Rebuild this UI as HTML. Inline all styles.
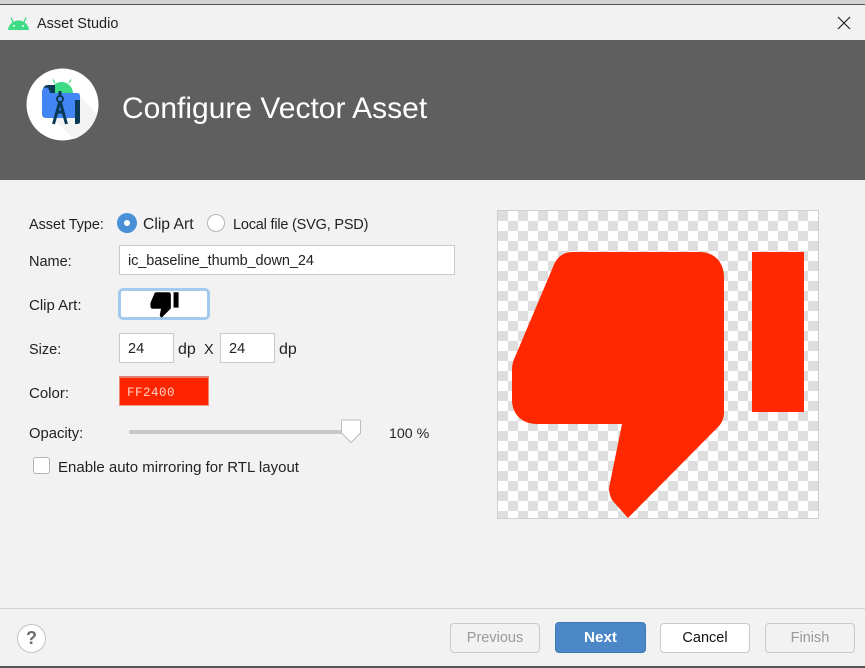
<!DOCTYPE html>
<html><head><meta charset="utf-8">
<style>
html,body{margin:0;padding:0}
body{width:865px;height:668px;overflow:hidden;position:relative;background:#f2f2f2;font-family:"Liberation Sans",sans-serif;font-size:14.5px;color:#222}
.a{position:absolute;white-space:nowrap}
.l{position:absolute;white-space:nowrap;line-height:18px;margin-top:1px}
.f{position:absolute;box-sizing:border-box;background:#fff;border:1px solid #c9c9c9;line-height:30px;padding-left:8px;color:#222}
.b{position:absolute;box-sizing:border-box;top:623px;height:30px;border-radius:4px;border:1px solid #c9c9c9;text-align:center;line-height:29px;font-size:14.5px}
</style></head><body>
<div class="a" style="left:0;top:0;width:865px;height:4px;background:#d4d4d4"></div>
<div class="a" style="left:0;top:4px;width:865px;height:1px;background:#555"></div>
<svg class="a" style="left:8px;top:16px" width="21" height="15" viewBox="0 0 21 15"><path d="M0 14C.5 8.500 5 4.500 10.500 4.500S20.500 8.500 21 14Z" fill="#3ddc84"/><path d="M5 6 3 1.500M16 6l2-4.500" stroke="#3ddc84" stroke-width="1.300" fill="none"/><circle cx="6" cy="10" r="1" fill="#fff"/><circle cx="15" cy="10" r="1" fill="#fff"/></svg>
<div class="l" style="left:37px;top:14px;color:#222">Asset Studio</div>
<svg class="a" style="left:837px;top:16px" width="14" height="14" viewBox="0 0 14 14"><path d="M1 1 13 13M13 1 1 13" stroke="#222" stroke-width="1.200" fill="none"/></svg>
<div class="a" style="left:0;top:40px;width:865px;height:140px;background:#5f5f5f"></div>
<svg class="a" style="left:26px;top:68px" width="73" height="73" viewBox="0 0 73 73">
<circle cx="36.500" cy="36.500" r="36" fill="#fff"/>
<path d="M50 24 71 46A36 36 0 0 1 48 71L26 50Z" fill="#f3f3f3"/>
<path d="M29 15 27 11.500M43 15l2-3.500" stroke="#3ddc84" stroke-width="1.200"/>
<path d="M24 26C24 19 29 14 35.500 14S47 19 47 26Z" fill="#3ddc84"/>
<path d="M17 22C17 19 19 17 22 17H29V25H17Z" fill="#0b3a57"/>
<path d="M16 24Q16 19.500 20 19.500Q23 19.500 24 25H51Q54 25 54 28V32H49V50H20Q16 50 16 46Z" fill="#4285f4"/>
<path d="M49 32H54V54Q54 56 51 56H49Z" fill="#0b3a57"/>
<path d="M34 23V28M34 33 27.500 56M34 33 40.500 56M29.500 44H38.500" stroke="#0b3a57" stroke-width="3" fill="none"/>
<circle cx="34" cy="31" r="3" fill="#4285f4" stroke="#0b3a57" stroke-width="2"/>
</svg>
<div class="a" style="left:122px;top:91px;font-size:30px;line-height:36px;color:#fff">Configure Vector Asset</div>

<div class="l" style="left:29px;top:215px;font-size:14.4px">Asset Type:</div>
<div class="a" style="left:117px;top:213px;width:20px;height:20px;border-radius:50%;background:#4a90d9"></div>
<div class="a" style="left:124px;top:220px;width:6px;height:6px;border-radius:50%;background:#fff"></div>
<div class="l" style="left:143px;top:215px;font-size:15.7px">Clip Art</div>
<div class="a" style="left:207px;top:214px;width:18px;height:18px;box-sizing:border-box;border-radius:50%;background:#fff;border:1px solid #b5b5b5"></div>
<div class="l" style="left:233px;top:215px;letter-spacing:-.2px">Local file (SVG, PSD)</div>

<div class="l" style="left:29px;top:252px">Name:</div>
<div class="f" style="left:119px;top:245px;width:336px;height:30px;letter-spacing:-.08px">ic_baseline_thumb_down_24</div>

<div class="l" style="left:29px;top:296px;font-size:15px">Clip Art:</div>
<div class="a" style="left:118px;top:288px;width:92px;height:32px;box-sizing:border-box;background:#fff;border:3px solid #a3c9f0;border-radius:5px"></div>
<svg class="a" style="left:149px;top:292px" width="31" height="26" viewBox="509 250 298 270"><path d="M572 252H700C714 252 724 262 724 277V412C724 418 722 423 718 427L628 518 612 500C610 496 609 492 609 488L622 424H537C522 424 512 414 512 400V370C512 365 513 361 515 357L553 267C556 258 563 252 572 252ZM752 252H804V412H752Z" fill="#000"/></svg>

<div class="l" style="left:29px;top:340px">Size:</div>
<div class="f" style="left:119px;top:333px;width:55px;height:30px">24</div>
<div class="l" style="left:178px;top:340px;font-size:16px">dp</div>
<div class="l" style="left:204px;top:340px">X</div>
<div class="f" style="left:220px;top:333px;width:55px;height:30px">24</div>
<div class="l" style="left:279px;top:340px;font-size:16px">dp</div>

<div class="l" style="left:29px;top:384px;font-size:15px">Color:</div>
<div class="a" style="left:119px;top:376px;width:90px;height:30px;box-sizing:border-box;background:#ff2400;border:1px solid #ee8877;border-bottom-color:#f4a090;border-top:2px solid #e08070"></div>
<div class="a" style="left:127px;top:385px;font-family:'Liberation Mono',monospace;font-size:12.500px;line-height:16px;color:#ffd3c9;letter-spacing:.5px">FF2400</div>

<div class="l" style="left:29px;top:424px;font-size:14.8px">Opacity:</div>
<div class="a" style="left:129px;top:430px;width:214px;height:4px;border-radius:2px;background:#c8c8c8"></div>
<svg class="a" style="left:340px;top:419px" width="22" height="25" viewBox="0 0 22 25"><path d="M1.500 2.500Q1.500 1 3 1H19Q20.500 1 20.500 2.500V14L11 23.500 1.500 14Z" fill="#fff" stroke="#bdbdbd" stroke-width="1"/></svg>
<div class="l" style="left:389px;top:424px;font-size:14.2px">100 %</div>

<div class="a" style="left:33px;top:457px;width:17px;height:17px;box-sizing:border-box;background:#fff;border:1px solid #b5b5b5;border-radius:3px"></div>
<div class="l" style="left:58px;top:458px;font-size:15px">Enable auto mirroring for RTL layout</div>

<div class="a" style="left:497px;top:210px;width:322px;height:309px;box-sizing:border-box;border:1px solid #cfcfcf;background-color:#fff;background-image:linear-gradient(45deg,#dedede 25%,transparent 25%,transparent 75%,#dedede 75%),linear-gradient(45deg,#dedede 25%,transparent 25%,transparent 75%,#dedede 75%);background-size:20px 20px;background-position:10px 0,0 10px"></div>
<svg class="a" style="left:0;top:0" width="865" height="668" viewBox="0 0 865 668"><path d="M572 252H700C714 252 724 262 724 277V412C724 418 722 423 718 427L628 518 612 500C610 496 609 492 609 488L622 424H537C522 424 512 414 512 400V370C512 365 513 361 515 357L553 267C556 258 563 252 572 252ZM752 252H804V412H752Z" fill="#ff2800"/></svg>

<div class="a" style="left:0;top:608px;width:865px;height:1px;background:#d2d2d2"></div>
<div class="a" style="left:17px;top:624px;width:29px;height:29px;box-sizing:border-box;border-radius:50%;background:#fff;border:1px solid #c4c4c4;text-align:center;line-height:27px;font-weight:bold;font-size:18px;color:#6e6e6e">?</div>
<div class="b" style="left:450px;width:90px;color:#9a9a9a;background:#f2f2f2">Previous</div>
<div class="b" style="left:555px;width:91px;height:31px;top:622px;background:#4c87c7;border-color:#3f78b5;color:#fff;font-weight:bold;line-height:30px;font-size:15.2px">Next</div>
<div class="b" style="left:660px;width:90px;background:#fff;color:#111">Cancel</div>
<div class="b" style="left:765px;width:90px;color:#9a9a9a;background:#f2f2f2">Finish</div>
<div class="a" style="left:0;top:666px;width:865px;height:2px;background:#555"></div>
</body></html>
